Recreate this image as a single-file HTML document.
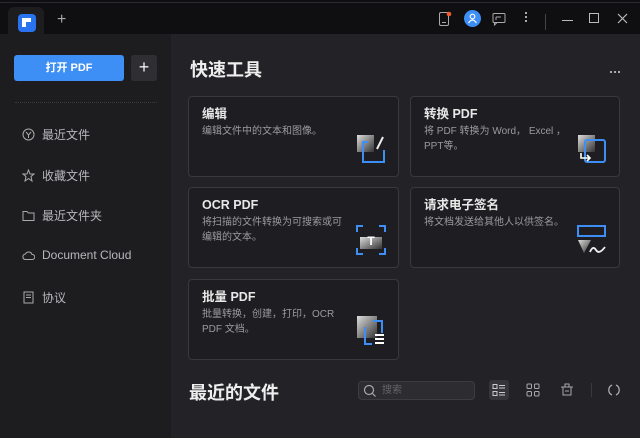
<!DOCTYPE html><html><head><meta charset="utf-8"><style>
*{margin:0;padding:0;box-sizing:border-box}
body{width:640px;height:438px;background:#0f0f12;font-family:"Liberation Sans","Noto Sans CJK SC",sans-serif;position:relative;overflow:hidden;color:#ddd}
.abs{position:absolute}
.side{left:0;top:34px;width:171px;height:404px;background:#1d1d20}
.main{left:171px;top:34px;width:469px;height:404px;background:#222227}
.card{position:absolute;width:211px;height:81px;border:1px solid #38383e;border-radius:4px;background:#1e1e22}
.card h3{position:absolute;left:13px;top:9px;line-height:16px;font-size:12.5px;font-weight:bold;color:#e8e8e8}
.card p{position:absolute;left:13px;top:27px;font-size:10px;line-height:15px;color:#9a9aa0;width:146px}
.card svg{position:absolute;right:12px;bottom:12px}
.mi{position:absolute;left:22px;font-size:12px;color:#b8b8bc;display:flex;align-items:center}
.mi svg{margin-right:7px}
</style></head><body>
<div class="abs" style="left:8px;top:7px;width:36px;height:27px;background:#1d1d20;border-radius:6px 6px 0 0"></div>
<div class="abs" style="left:18px;top:14px;width:18px;height:18px;background:#2a73f0;border-radius:4px"><div class="abs" style="left:4px;top:4px;width:9px;height:4px;background:#fff"></div><div class="abs" style="left:4px;top:8px;width:4px;height:5px;background:#fff"></div></div>
<div class="abs" style="left:57px;top:11px;font-size:16px;color:#aaa">+</div>
<svg class="abs" style="left:438px;top:11px" width="14" height="16"><rect x="1.5" y="1.5" width="9" height="13" rx="1.5" fill="none" stroke="#aaa"/><line x1="4" y1="11.5" x2="8" y2="11.5" stroke="#aaa"/><circle cx="11" cy="3" r="2.3" fill="#f05a28"/></svg>
<div class="abs" style="left:464px;top:10px;width:17px;height:17px;border-radius:50%;background:#3d8ef5"><svg width="17" height="17"><circle cx="8.5" cy="6.5" r="2.3" fill="none" stroke="#fff" stroke-width="1.2"/><path d="M4.5 13 Q8.5 7 12.5 13" fill="none" stroke="#fff" stroke-width="1.2"/></svg></div>
<svg class="abs" style="left:492px;top:12px" width="14" height="14"><rect x="1" y="1.5" width="12" height="9" rx="1" fill="none" stroke="#aaa"/><path d="M2.5 10.5 V13 L5 10.5" fill="none" stroke="#aaa"/><line x1="4" y1="5" x2="9" y2="5" stroke="#aaa"/><line x1="4" y1="5" x2="4" y2="8" stroke="#aaa"/></svg>
<div class="abs" style="left:525px;top:12px;width:2px;height:2px;background:#aaa;box-shadow:0 4px #aaa,0 8px #aaa"></div>
<div class="abs" style="left:545px;top:14px;width:1px;height:16px;background:#444"></div>
<div class="abs" style="left:562px;top:20px;width:11px;height:1px;background:#bbb"></div>
<div class="abs" style="left:589px;top:13px;width:10px;height:10px;border:1.3px solid #bbb"></div>
<svg class="abs" style="left:617px;top:13px" width="11" height="11"><path d="M1 1L10 10M10 1L1 10" stroke="#bbb" stroke-width="1.2"/></svg>
<div class="abs" style="left:0;top:2px;width:640px;height:1px;background:#2a2a2e"></div>
<div class="abs side"></div>
<div class="abs main"></div>
<div class="abs" style="left:14px;top:55px;width:110px;height:26px;background:#3d8ef5;border-radius:3px;color:#fff;font-size:11px;font-weight:bold;text-align:center;line-height:26px">打开 PDF</div>
<div class="abs" style="left:131px;top:55px;width:26px;height:26px;background:#2f2f33;border-radius:3px;color:#eee;font-size:18px;text-align:center;line-height:25px">+</div>
<div class="abs" style="left:15px;top:102px;width:142px;border-top:1px dotted #3a3a3e"></div>
<div class="mi" style="top:126px"><svg width="13" height="13"><circle cx="6.5" cy="6.5" r="5.5" fill="none" stroke="#aaa"/><path d="M4 4L6.5 7L9 4M6.5 7V10" fill="none" stroke="#aaa"/></svg>最近文件</div>
<div class="mi" style="top:167px"><svg width="13" height="13"><path d="M6.5 1L8 5H12L9 7.5L10 12L6.5 9.5L3 12L4 7.5L1 5H5Z" fill="none" stroke="#aaa"/></svg>收藏文件</div>
<div class="mi" style="top:207px"><svg width="13" height="13"><path d="M1 2.5H5L6.5 4H12V11.5H1Z" fill="none" stroke="#aaa"/></svg>最近文件夹</div>
<div class="mi" style="top:248px"><svg width="13" height="13"><path d="M3 10.5H10.5A2.5 2.5 0 0 0 10 5.5A3.5 3.5 0 0 0 3.5 5A2.8 2.8 0 0 0 3 10.5Z" fill="none" stroke="#aaa"/></svg>Document Cloud</div>
<div class="mi" style="top:289px"><svg width="13" height="13"><rect x="2" y="1" width="9" height="11" fill="none" stroke="#aaa"/><path d="M4 4H9M4 6.5H9" stroke="#aaa"/></svg>协议</div>
<div class="abs" style="left:190px;top:56px;font-size:18px;font-weight:bold;color:#eee">快速工具</div>
<div class="abs" style="left:610px;top:71px;width:2px;height:2px;background:#aaa;box-shadow:4px 0 #aaa,8px 0 #aaa"></div>
<div class="card" style="left:188px;top:96px"><h3>编辑</h3><p>编辑文件中的文本和图像。</p>
<svg width="30" height="30"><defs><linearGradient id="g" x1="0" y1="0" x2="1" y2="1"><stop offset="0" stop-color="#ddd"/><stop offset="1" stop-color="#333"/></linearGradient></defs><rect x="1" y="1" width="17" height="17" fill="url(#g)"/><path d="M12 8H7V28H28V16" fill="none" stroke="#3d8ef5" stroke-width="2"/><path d="M21 15L27 3" stroke="#eee" stroke-width="2"/></svg></div>
<div class="card" style="left:410px;top:96px;width:210px"><h3>转换 PDF</h3><p>将 PDF 转换为 Word， Excel ，PPT等。</p>
<svg width="30" height="30"><rect x="1" y="1" width="17" height="17" fill="url(#g)"/><rect x="8" y="6" width="20" height="22" rx="2" fill="none" stroke="#3d8ef5" stroke-width="2"/><path d="M4 19V24H12M10 21L13 24L10 27" fill="none" stroke="#fff" stroke-width="1.6"/></svg></div>
<div class="card" style="left:188px;top:187px"><h3>OCR PDF</h3><p>将扫描的文件转换为可搜索或可编辑的文本。</p>
<svg width="30" height="30"><path d="M1 7V1H7M23 1H29V7M1 23V29H7M23 29H29V23" fill="none" stroke="#3d8ef5" stroke-width="2"/><rect x="4" y="12" width="22" height="12" fill="url(#g)"/><text x="15" y="20" fill="#fff" font-size="12" font-weight="bold" text-anchor="middle" font-family="Liberation Sans">T</text></svg></div>
<div class="card" style="left:410px;top:187px;width:210px"><h3>请求电子签名</h3><p style="width:180px">将文档发送给其他人以供签名。</p>
<svg width="30" height="30"><rect x="1" y="1" width="27" height="10" fill="none" stroke="#3d8ef5" stroke-width="2"/><path d="M1 15H14L7 28Z" fill="url(#g)"/><path d="M13 27Q16 20 19 25T28 22" fill="none" stroke="#eee" stroke-width="1.8"/></svg></div>
<div class="card" style="left:188px;top:279px"><h3>批量 PDF</h3><p>批量转换，创建，打印，OCR PDF 文档。</p>
<svg width="30" height="32"><rect x="1" y="1" width="20" height="22" fill="url(#g)"/><path d="M17 6H26V18M9 12V29H16" fill="none" stroke="#3d8ef5" stroke-width="2"/><path d="M19 20H28M19 24H28M19 28H28" stroke="#fff" stroke-width="2"/></svg></div>
<div class="abs" style="left:189px;top:379px;font-size:18px;font-weight:bold;color:#eee">最近的文件</div>
<div class="abs" style="left:358px;top:381px;width:117px;height:19px;background:#2c2c31;border:1px solid #3c3c42;border-radius:4px;font-size:10px;color:#666;line-height:17px;padding-left:23px">搜索</div>
<svg class="abs" style="left:363px;top:384px" width="14" height="14"><circle cx="6" cy="6" r="4.5" fill="none" stroke="#aaa" stroke-width="1.2"/><path d="M9.5 9.5L12.5 12.5" stroke="#aaa" stroke-width="1.2"/></svg>
<div class="abs" style="left:489px;top:380px;width:20px;height:20px;background:#35353a;border-radius:3px"></div>
<svg class="abs" style="left:492px;top:383px" width="14" height="14"><rect x="1" y="1.5" width="4" height="4" fill="none" stroke="#ccc"/><rect x="1" y="8.5" width="4" height="4" fill="none" stroke="#ccc"/><path d="M7 2.5H13M7 5H13M7 9.5H13M7 12H13" stroke="#ccc"/></svg>
<svg class="abs" style="left:526px;top:383px" width="14" height="14"><rect x="1" y="1" width="4.5" height="4.5" rx="1" fill="none" stroke="#aaa"/><rect x="8.5" y="1" width="4.5" height="4.5" rx="1" fill="none" stroke="#aaa"/><rect x="1" y="8.5" width="4.5" height="4.5" rx="1" fill="none" stroke="#aaa"/><rect x="8.5" y="8.5" width="4.5" height="4.5" rx="1" fill="none" stroke="#aaa"/></svg>
<svg class="abs" style="left:560px;top:382px" width="14" height="15"><path d="M1 5H13M3 5V13H11V5M5 5V2H9V5M5 9H9" fill="none" stroke="#aaa"/></svg>
<div class="abs" style="left:591px;top:383px;width:1px;height:14px;background:#3a3a3e"></div>
<svg class="abs" style="left:607px;top:383px" width="14" height="14"><path d="M5 2A5.5 5.5 0 0 0 5 12M9 2A5.5 5.5 0 0 1 9 12" fill="none" stroke="#aaa" stroke-width="1.3"/></svg>
</body></html>
